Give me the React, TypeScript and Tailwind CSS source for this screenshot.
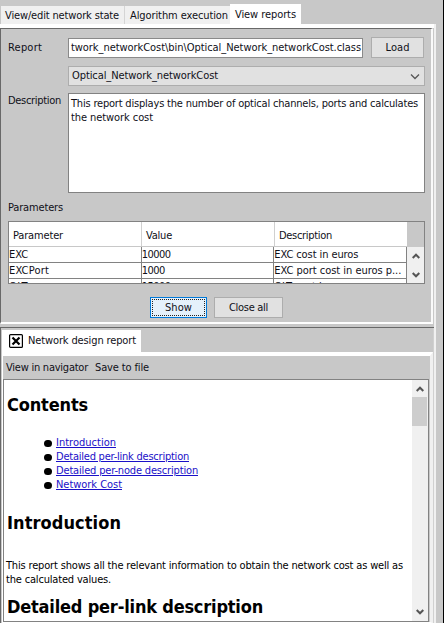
import { useLayoutEffect, useRef, useState } from 'react';

type TextProps = { children: string; w: number; className?: string };

/* Single line label whose tracking is adjusted so it spans exactly w pixels. */
function Text({ children, w, className = '' }: TextProps) {
  const ref = useRef<HTMLSpanElement>(null);
  const [spacing, setSpacing] = useState(0);
  useLayoutEffect(() => {
    if (!ref.current) return;
    const natural = ref.current.getBoundingClientRect().width - spacing * children.length;
    setSpacing((w - natural) / children.length);
  }, [w, children]);
  return (
    <span ref={ref} className={`inline-block shrink-0 whitespace-pre ${className}`} style={{ letterSpacing: spacing }}>
      {children}
    </span>
  );
}

function Chevron({ down = false }: { down?: boolean }) {
  return (
    <svg width="8" height="6" viewBox="0 0 8 6" fill="none" stroke="#555" strokeWidth="2">
      <path d={down ? 'M.7 1 4 4.3 7.3 1' : 'M.7 5 4 1.7 7.3 5'} />
    </svg>
  );
}

const rows = [
  [{ t: 'EXC', w: 19 }, { t: '10000', w: 29 }, { t: 'EXC cost in euros', w: 84 }],
  [{ t: 'EXCPort', w: 40 }, { t: '1000', w: 23 }, { t: 'EXC port cost in euros p...', w: 127 }],
  [{ t: 'OLT', w: 19 }, { t: '15000', w: 29 }, { t: 'OLT cost in euros', w: 84 }],
];

const links = [
  { t: 'Introduction', w: 60 },
  { t: 'Detailed per-link description', w: 133 },
  { t: 'Detailed per-node description', w: 142 },
  { t: 'Network Cost', w: 66 },
];

function ReportForm() {
  return (
    <div className="flex h-[296px] w-[433px] flex-col border-l border-t border-[#686868] border-r-2 border-r-[#fafafa] border-b-2 border-b-white pl-[7px]">
      <div className="mt-2 flex h-[21px] items-center">
        <div className="w-[60px]"><Text w={34}>Report</Text></div>
        <div className="flex h-5 w-[295px] items-center border border-[#8a8a8a] bg-white pl-[2px]">
          <Text w={290}>{'twork_networkCost\\bin\\Optical_Network_networkCost.class'}</Text>
        </div>
        <div className="ml-2 flex h-[21px] w-[53px] items-center justify-center border border-[#adadad] bg-[#e1e1e1]"><Text w={24}>Load</Text></div>
      </div>
      <div className="ml-[60px] mt-2 flex h-5 w-[357px] items-center justify-between border border-[#adadad] bg-[#e1e1e1] pl-[3px] pr-1">
        <Text w={146}>Optical_Network_networkCost</Text>
        <svg width="10" height="7" viewBox="0 0 10 7" fill="none" stroke="#555" strokeWidth="1.3"><path d="m1 1.5 4 4 4-4" /></svg>
      </div>
      <div className="mt-[7px] flex">
        <div className="w-[60px] pt-px"><Text w={53}>Description</Text></div>
        <div className="h-[100px] w-[357px] border border-[#828282] bg-white pl-[2px] pt-[3px]">
          <Text w={347}>This report displays the number of optical channels, ports and calculates</Text>
          <Text w={82}>the network cost</Text>
        </div>
      </div>
      <div className="mt-[8px] h-[13px]"><Text w={55}>Parameters</Text></div>
      <div className="mt-[7px] flex h-[63px] w-[417px] overflow-hidden border border-[#828282]">
        <div className="w-[398px] shrink-0 overflow-hidden bg-white">
          <div className="flex h-[25px] items-center border-b border-[#c8c8c8] pt-[3px]">
            <div className="-mt-[3px] flex h-6 w-[133px] items-center border-r border-[#d0d0d0] pl-1 pt-[3px]"><Text w={50}>Parameter</Text></div>
            <div className="-mt-[3px] flex h-6 w-[133px] items-center border-r border-[#d0d0d0] pl-1 pt-[3px]"><Text w={26}>Value</Text></div>
            <div className="pl-1"><Text w={53}>Description</Text></div>
          </div>
          {rows.map((row) => (
            <div key={row[0].t} className="flex h-4 border-b border-[#828282]">
              {row.map((c) => (
                <div key={c.t} className="h-4 w-[133px] overflow-hidden border-r border-[#828282] pt-px"><Text w={c.w}>{c.t}</Text></div>
              ))}
            </div>
          ))}
        </div>
        <div className="flex w-[17px] flex-col pt-[25px]">
          <div className="flex flex-1 flex-col items-center justify-between bg-[#f0f0f0] pb-[5px] pt-[6px]">
            <Chevron />
            <Chevron down />
          </div>
        </div>
      </div>
      <div className="ml-[142px] mt-[13px] flex gap-[7px]">
        <div className="h-[21px] w-[57px] border border-[#0078d7] bg-[#e5f1fb] p-px">
          <div className="flex h-full items-center justify-center border border-dotted border-[#222]"><Text w={27}>Show</Text></div>
        </div>
        <div className="flex h-[21px] w-[69px] items-center justify-center border border-[#adadad] bg-[#e1e1e1]"><Text w={39}>Close all</Text></div>
      </div>
    </div>
  );
}

function ReportPage() {
  return (
    <div className="flex h-[243px] w-[426px] border border-[#828282] bg-white">
      <div className="w-[408px] overflow-hidden pl-[3px] text-black">
        <div className="mt-[13px] h-6 text-[18px] font-bold leading-6"><Text w={81}>Contents</Text></div>
        <ul className="ml-[37px] mt-[19px]">
          {links.map((l) => (
            <li key={l.t} className="flex h-[14px] items-center">
              <i className="h-[7px] w-[8px] rounded-full bg-black" />
              <a className="ml-1 flex text-[#1a10c8] underline underline-offset-1"><Text w={l.w}>{l.t}</Text></a>
            </li>
          ))}
        </ul>
        <div className="mt-[19px] h-6 text-[18px] font-bold leading-6"><Text w={114}>Introduction</Text></div>
        <div className="-ml-px mt-[24px] flex flex-col items-start">
          <Text w={397}>This report shows all the relevant information to obtain the network cost as well as</Text>
          <Text w={105}>the calculated values.</Text>
        </div>
        <div className="mt-[8px] h-6 text-[18px] font-bold leading-6"><Text w={256}>Detailed per-link description</Text></div>
      </div>
      <div className="flex w-4 flex-col items-center bg-[#f0f0f0]">
        <div className="flex h-[17px] items-center"><Chevron /></div>
        <div className="mr-px h-[29px] w-[15px] bg-[#cdcdcd]" />
        <div className="mb-[6px] mt-auto"><Chevron down /></div>
      </div>
    </div>
  );
}

export default function App() {
  return (
    <main className="flex h-[623px] w-[444px] overflow-hidden border-r border-black bg-[#c8c8c8] font-['DejaVu_Sans_Condensed','DejaVu_Sans',sans-serif] text-[11px] leading-[14px] text-[#101018]">
      <div className="flex w-[436px] flex-col">
        <div className="mt-1 flex h-5 items-end">
          <div className="ml-px flex h-[18px] w-[124px] items-center border-r border-[#d5d5d5] bg-[#f0f0f0] pl-1 pt-[2px]"><Text w={114}>View/edit network state</Text></div>
          <div className="flex h-[18px] w-[105px] items-center bg-[#f0f0f0] pl-[5px] pt-[2px]"><Text w={98}>Algorithm execution</Text></div>
          <div className="flex h-5 w-[71px] items-center bg-white pl-[5px] pt-px"><Text w={61}>View reports</Text></div>
        </div>
        <div className="flex h-[599px] flex-col border-r-2 border-[#f0f0f0]">
          <div className="h-1 shrink-0 bg-white" />
          <ReportForm />
          <div className="mt-[3px] h-px w-[434px] shrink-0 bg-[#686868]" />
          <div className="flex h-[295px] w-[434px] shrink-0 flex-col border-l border-[#686868] border-r border-r-[#d0d0d0] pl-px">
            <div className="mt-[2px] flex h-[22px] w-[139px] shrink-0 items-center bg-white pl-[7px]">
              <svg width="14" height="14" viewBox="0 0 14 14" fill="none" stroke="black">
                <rect x=".6" y=".6" width="12.8" height="12.8" rx="1" strokeWidth="1.2" fill="white" />
                <path d="m3.5 3.5 7 7m0-7-7 7" strokeWidth="2.2" />
              </svg>
              <span className="ml-[5px] flex"><Text w={108}>Network design report</Text></span>
            </div>
            <div className="flex grow flex-col border-l border-t-4 border-r-[3px] border-white border-r-[#f0f0f0] border-b">
              <div className="flex h-[23px] items-center gap-[7px] pl-[3px]">
                <Text w={82}>View in navigator</Text>
                <Text w={54}>Save to file</Text>
              </div>
              <ReportPage />
            </div>
          </div>
        </div>
      </div>
    </main>
  );
}
